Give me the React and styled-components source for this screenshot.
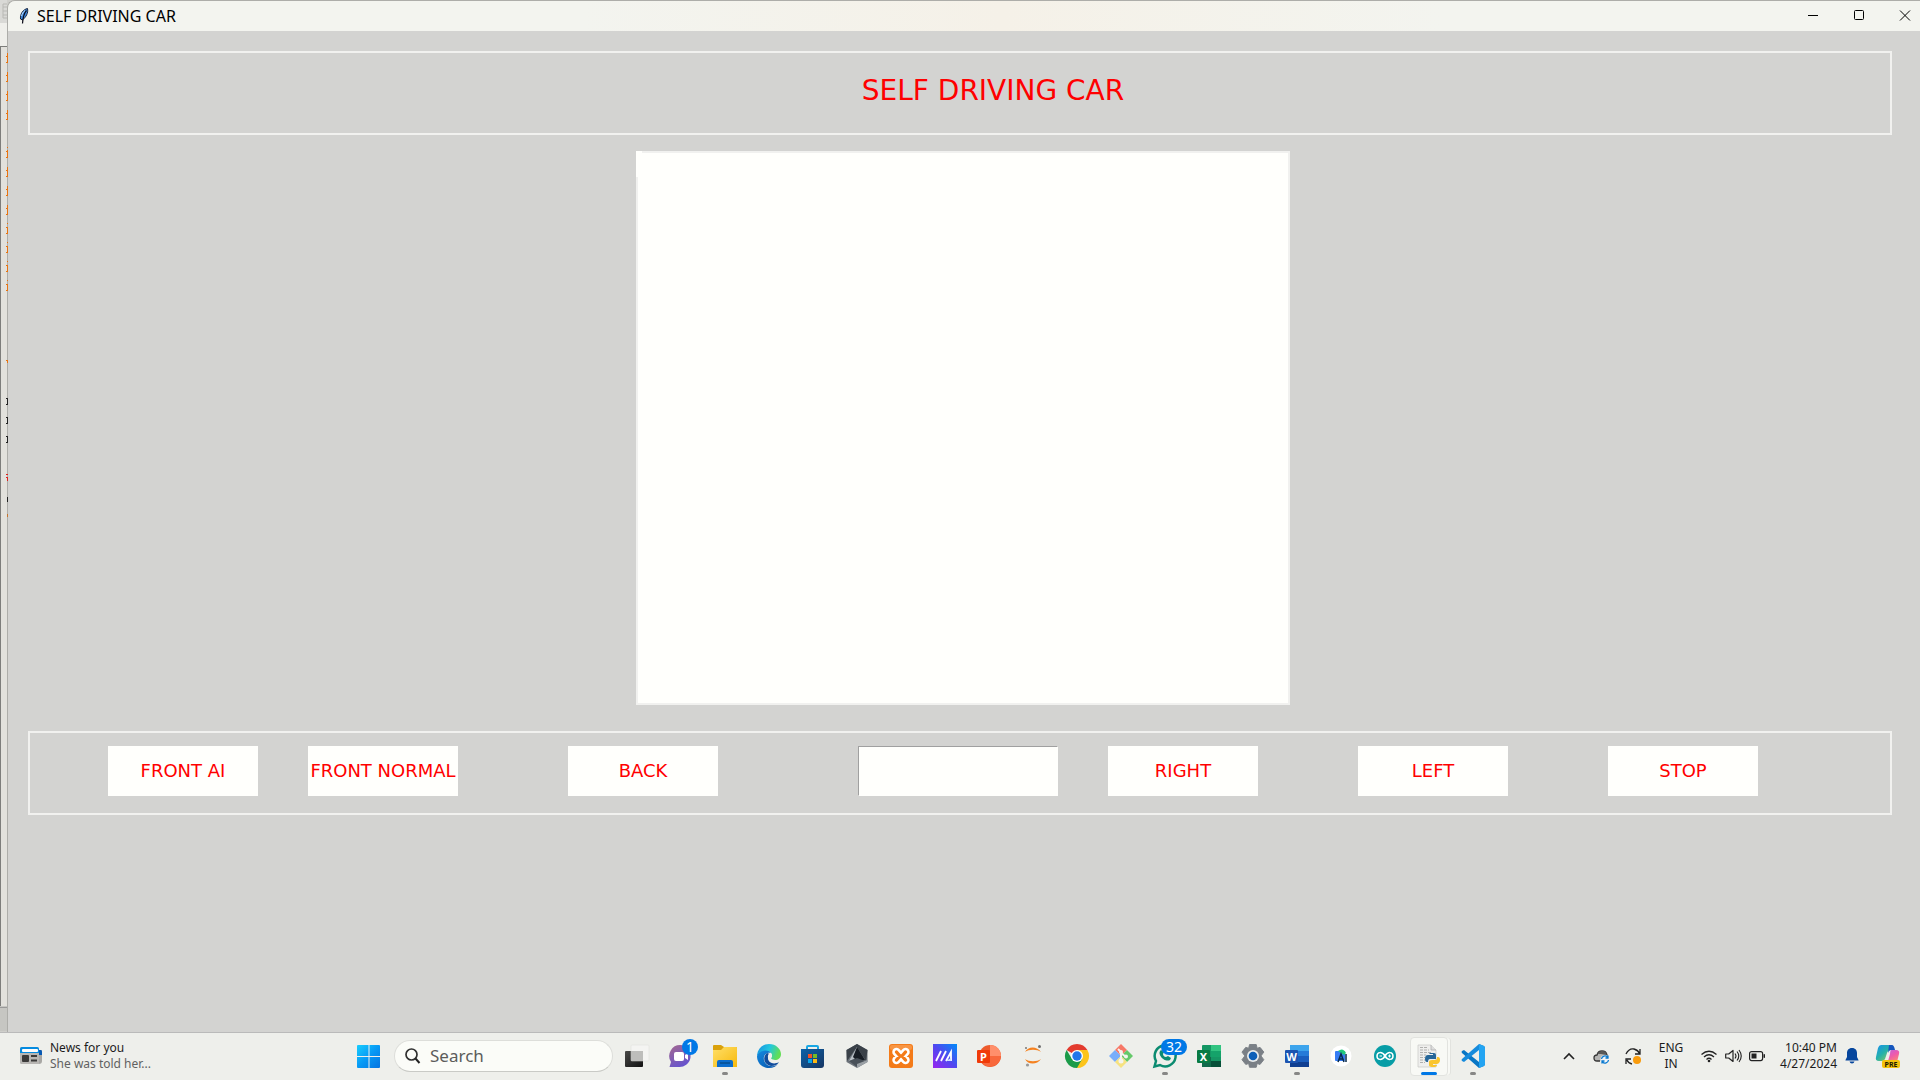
import React from "react";
import styled, { createGlobalStyle, css } from "styled-components";

const GlobalStyle = createGlobalStyle`
  * { box-sizing: border-box; }
  body { margin: 0; background: #d3d3d1; }
  button, input { font: inherit; color: inherit; margin: 0; padding: 0; border: 0; border-radius: 0; outline: 0; }
  button { background: none; cursor: pointer; }
  svg { display: block; flex: none; overflow: visible; }
`;

const uiFont = `"Noto Sans", "Open Sans", sans-serif`;
const tkFont = `"DejaVu Sans", Verdana, sans-serif`;

const Desktop = styled.div`
  min-height: 100vh;
  display: flex;
  flex-direction: column;
  font-family: ${uiFont};
  color: #1b1b1b;
`;

const Workspace = styled.div`
  flex: 1;
  display: flex;
  background: #cfcfcb;
`;

const BackWindow = styled.div`
  width: 7px;
  flex: none;
  z-index: 1;
`;

const AppWindow = styled.main`
  flex: 1;
  min-width: 0;
  display: flex;
  flex-direction: column;
  background: #d3d3d1;
  border-top: 1px solid #adada9;
  border-left: 1px solid #adada9;
  border-top-left-radius: 8px;
  overflow: hidden;
`;

const TitleBar = styled.header`
  height: 30px;
  display: flex;
  align-items: center;
  padding-left: 10px;
  background: linear-gradient(90deg, #f3f4ef 0%, #f3f4ef 30%, #f5f1e8 52%, #f3f4ef 75%);
`;

const WindowTitle = styled.h1`
  margin: 0 auto 0 7px;
  font-size: 16px;
  line-height: 24px;
  font-weight: 400;
  color: #000;
`;

const WindowButtons = styled.div`
  display: flex;
  gap: 16px;
`;

const WindowButton = styled.button`
  width: 30px;
  height: 30px;
  display: grid;
  place-items: center;
`;

const WindowBody = styled.div`
  padding: 20px 28px 20px 20px;
`;

const framed = css`
  border: 2px solid #f1f1ef;
`;

const Banner = styled.section`
  ${framed}
  padding: 24px 0 28px 66px;
  text-align: center;
`;

const BannerText = styled.h2`
  margin: 0;
  font: 400 28px/28px ${tkFont};
  color: #f00;
`;

const Stage = styled.section`
  display: flex;
  justify-content: center;
  padding: 16px 0 26px 6px;
`;

const VideoCanvas = styled.div`
  ${framed}
  width: 654px;
  height: 554px;
  background: #fffffc;
`;

const VideoLabel = styled.div`
  width: 6px;
  height: 26px;
  margin: -2px;
  background: #fffffc;
`;

const Controls = styled.section`
  ${framed}
  display: flex;
  padding: 13px 0 17px 78px;
`;

const DriveButton = styled.button`
  width: 150px;
  height: 50px;
  flex: none;
  margin-left: ${(p) => p.$gap}px;
  background: #fffffc;
  color: #f00;
  font: 400 18px/20px ${tkFont};
  white-space: nowrap;
`;

const SpeedEntry = styled.input`
  width: 200px;
  height: 50px;
  flex: none;
  margin-left: 140px;
  background: #fffffc;
  border: 1px solid #fffffc;
  border-top-color: #a0a0a0;
  border-left-color: #a0a0a0;
  font: 400 18px/20px ${tkFont};
`;

const Taskbar = styled.footer`
  height: 48px;
  display: flex;
  align-items: stretch;
  padding-bottom: 1px;
  background: #eeefeb;
  border-top: 1px solid #bababa;
`;

const NewsButton = styled.button`
  width: 347px;
  flex: none;
  display: flex;
  align-items: center;
  gap: 7px;
  padding-left: 20px;
  text-align: left;
`;

const NewsText = styled.span`
  display: block;
  font-size: 12px;
  line-height: 16px;
  color: ${(p) => (p.$muted ? "#616161" : "#1b1b1b")};
`;

const Dock = styled.nav`
  display: flex;
  align-items: center;
`;

const DockButton = styled.button`
  position: relative;
  width: 44px;
  height: 46px;
  display: grid;
  place-items: center;
`;

const ActiveCard = styled.span`
  position: absolute;
  inset: 4px 3px 3px;
  border: 1px solid #e2e3df;
  border-radius: 4px;
  background: #f8f9f5;
  box-shadow: 3px 0 0 -1px #f8f9f5, 4px 0 0 -1px #e2e3df;
`;

const IconHolder = styled.span`
  position: relative;
`;

const RunMark = styled.span`
  position: absolute;
  bottom: 4px;
  left: 50%;
  width: ${(p) => (p.$active ? 16 : 6)}px;
  height: 3px;
  border-radius: 2px;
  transform: translateX(-50%);
  background: ${(p) => (p.$active ? "#0078e6" : "#878786")};
`;

const Badge = styled.span`
  position: absolute;
  top: -5px;
  left: ${(p) => (p.$wide ? 8 : 13)}px;
  width: ${(p) => (p.$wide ? 26 : 16)}px;
  height: 16px;
  border-radius: 8px;
  background: #0078e6;
  color: #fff;
  font-size: 14px;
  line-height: 16px;
  text-align: center;
`;

const SearchBox = styled.label`
  width: 219px;
  height: 32px;
  margin: 0 2px 0 3px;
  display: flex;
  align-items: center;
  gap: 10px;
  padding: 0 12px 0 10px;
  border: 1px solid #dddeda;
  border-bottom-color: #c9cac6;
  border-radius: 16px;
  background: #fbfcf8;
`;

const SearchInput = styled.input`
  min-width: 0;
  flex: 1;
  background: none;
  font-size: 17px;
  line-height: 24px;
  &::placeholder { color: #5c5c5b; opacity: 1; }
`;

const Tray = styled.div`
  margin-left: auto;
  display: flex;
  align-items: center;
  padding-right: 8px;
`;

const TrayButton = styled.button`
  width: ${(p) => p.$w}px;
  height: 40px;
  display: grid;
  place-items: center;
`;

const TrayText = styled.button`
  width: ${(p) => p.$w}px;
  padding-right: ${(p) => (p.$end ? 3 : 0)}px;
  font-size: 12px;
  line-height: 16px;
  text-align: ${(p) => (p.$end ? "right" : "center")};
  white-space: nowrap;
`;

const Line = styled.span`
  display: block;
`;

const QuickGroup = styled.div`
  display: flex;
  margin: 0 4px;
`;

const Icon = ({ children, size = 24 }) => (
  <svg width={size} height={size} viewBox={`0 0 ${size} ${size}`} aria-hidden="true">{children}</svg>
);

/* Slivers of the editor window showing at the left edge: y, height, tick rows, colour */
const orange = "#e8730f";
const ink = "#222";
const codeMarks = [
  ...[53, 72, 91, 110].map((y) => [y, 10, [3, 9], orange]),
  [147, 1, [], orange],
  [150, 8, [1, 7], orange],
  ...[167, 186, 205].map((y) => [y, 10, [3, 9], orange]),
  ...[227, 246, 265, 284].map((y) => [y, 7, [0, 6], orange]),
  ...[223, 242, 261, 280].map((y) => [y, 1, [], orange]),
  [360, 3, [0], orange],
  ...[398, 417, 436].map((y) => [y, 7, [0, 6], ink]),
  [474, 1, [0], "#e0201c"],
  [477, 4, [0], "#e0201c"],
  [497, 5, [], ink],
  [514, 3, [], "#c8742c"],
];

const EditorEdge = () => (
  <svg width="8" height="1031" viewBox="0 0 8 1031" aria-hidden="true">
    <rect width="7" height="23" fill="#d9d9d6" />
    <path d="M3 4h4M3 7h4M3 11h4M3 15h4M3 18h4M3 4v14" stroke="#b9b9b5" fill="none" />
    <rect y="23" width="7" height="23" fill="#efefeb" />
    <rect y="46" width="7" height="960" fill="#e2e1dc" />
    <rect y="46" width="1" height="960" fill="#7d7d7b" />
    <rect y="46" width="7" height="1" fill="#7d7d7b" />
    <rect y="1006" width="7" height="25" fill="#c6c6c2" />
    <rect y="1007" width="7" height="1" fill="#999" />
    {codeMarks.map(([y, h, ticks, c]) => (
      <g key={y} fill={c}>
        <rect x="7" y={y} width="1" height={h} />
        {ticks.map((t) => <rect key={t} x="6" y={y + t} width="1" height="1" />)}
      </g>
    ))}
  </svg>
);

const Feather = () => (
  <svg width="12" height="16" viewBox="0 0 12 16" aria-hidden="true">
    <path d="M9.5.5C5 1.500 2 6 2.500 11L4.500 12C8 9 10.500 5 9.500.5Z" fill="#3f8ae0" stroke="#14213a" />
    <path d="M8.500 2.500C6 5 5 8 4.500 15.500" stroke="#0b0b18" strokeWidth="1.200" fill="none" />
    <path d="M7 2.500C5 4 4 6 3.600 8" stroke="#b8dcff" fill="none" />
  </svg>
);

const NewsIcon = () => (
  <svg width="23" height="18" viewBox="0 0 23 18" aria-hidden="true">
    <path d="M2 0h15q2 0 2 3h2q1 0 1 2v9q0 3-3 3H2q-2 0-2-2V2q0-2 2-2Z" fill="#a8a7a4" />
    <path d="M19 3h2q1 0 1 2v3h-3Z" fill="#0759b3" />
    <path d="M2 0h15q2 0 2 2v4H0V2q0-2 2-2Z" fill="#058be0" />
    <rect x="2" y="2" width="16" height="3" rx="1" fill="#fff" />
    <path d="M0 6h19v11H2q-2 0-2-2Z" fill="#b8b6b3" />
    <rect x="2" y="8" width="7" height="7" rx="1" fill="#3b3a39" />
    <path d="M11 9h6M11 13.500h6" stroke="#3b3a39" strokeWidth="2" />
  </svg>
);

const StartIcon = () => (
  <Icon>
    <defs><linearGradient id="start" x1="0" y1="0" x2="1" y2="1" gradientUnits="objectBoundingBox">
      <stop stopColor="#18cdfd" /><stop offset=".5" stopColor="#0799f5" /><stop offset="1" stopColor="#0573e0" />
    </linearGradient></defs>
    <path d="M1 1h10.500v11H0V2q0-1 1-1ZM12.500 1H22q1 0 1 1v10H12.500ZM0 13h11.500v11H1q-1 0-1-1ZM12.500 13H23v10q0 1-1 1h-9.500Z" fill="url(#start)" />
  </Icon>
);

const SearchIcon = () => (
  <svg width="15" height="16" viewBox="0 0 15 16" aria-hidden="true">
    <circle cx="6.500" cy="6.500" r="5.500" fill="none" stroke="#303030" strokeWidth="1.700" />
    <path d="m10.500 10.500 4 4.500" stroke="#222" strokeWidth="2" />
  </svg>
);

const TaskView = () => (
  <Icon>
    <defs><linearGradient id="tv" x2="1" y2="1"><stop stopColor="#484847" /><stop offset="1" stopColor="#111" /></linearGradient></defs>
    <rect y="7" width="18" height="16" rx="1" fill="url(#tv)" />
    <rect x="6" y="1" width="18" height="16" rx="1" fill="#f4f4f2" stroke="#deded9" strokeWidth=".5" />
    <path d="M6 7h12v10H6Z" fill="#bdbdbb" />
  </Icon>
);

const ChatIcon = () => (
  <Icon>
    <defs><linearGradient id="chat" x2=".5" y2="1"><stop stopColor="#a4688f" /><stop offset="1" stopColor="#6854cc" /></linearGradient></defs>
    <path d="M12 1a11 11 0 1 1-3 22L.5 23 2 18A11 11 0 0 1 12 1Z" fill="url(#chat)" />
    <rect x="5" y="8" width="10" height="9" rx="2" fill="#fff" />
    <path d="m16 11 3-2v7l-3-2Z" fill="#fff" />
  </Icon>
);

const ExplorerIcon = () => (
  <Icon>
    <defs><linearGradient id="fold" x2="1" y2="1"><stop stopColor="#ffdf68" /><stop offset="1" stopColor="#f7b90c" /></linearGradient></defs>
    <path d="M1 1h7l3 2h12q1 0 1 1v18H0V2q0-1 1-1Z" fill="#daa10a" />
    <path d="M0 6h8l3-3h12q1 0 1 1v19H0Z" fill="url(#fold)" />
    <path d="M4 23v-5q0-2 2-2h12q2 0 2 2v5Z" fill="#0c6dcc" /><path d="M7 19h10" stroke="#07569f" strokeWidth="2" />
  </Icon>
);

const EdgeIcon = () => (
  <Icon>
    <defs>
      <linearGradient id="edgeA" x2="1" y2=".3"><stop stopColor="#168be0" /><stop offset=".55" stopColor="#22c7df" /><stop offset="1" stopColor="#62de55" /></linearGradient>
      <linearGradient id="edgeB" y2="1"><stop stopColor="#1389df" /><stop offset="1" stopColor="#0753aa" /></linearGradient>
    </defs>
    <path d="M0 11C1 4 6 0 12 0c7 0 12 5 12 10 0 4-3 6-6 6-3 0-4-1-4-2 1-1 1-2 1-3C14 5 4 6 0 12Z" fill="url(#edgeA)" />
    <path d="M0 12C2 6 11 5 14 9c-5-1-8 3-7 7 1 5 7 8 13 5l2-2c-2 3-6 5-10 5C5 24 0 19 0 12Z" fill="url(#edgeB)" />
    <path d="M10 9c-5 4-3 12 4 13 4 0 6-1 8-4-5 3-11 1-11-4 0-2 1-3 2-4Z" fill="#104c9c" />
    <path d="M13 9c-2 1-3 4-1 7 2 2 7 3 10 1-1-1-3-1-4-1-3 0-4-1-4-2 1-1 1-2 1-3q0-1-2-2Z" fill="#eeefeb" />
  </Icon>
);

const StoreIcon = () => (
  <Icon>
    <defs><linearGradient id="store" y2="1"><stop stopColor="#0c62a8" /><stop offset="1" stopColor="#173663" /></linearGradient></defs>
    <path d="M6 6V3q0-1 1-1h9q1 0 1 1v3" stroke="#18a7e4" strokeWidth="2" fill="none" />
    <path d="M0 5h23v16q0 3-3 3H3q-3 0-3-3Z" fill="url(#store)" />
    <path d="M7 10h4v4H7Z" fill="#f35225" /><path d="M12 10h4v4h-4Z" fill="#73ba25" />
    <path d="M7 15h4v4H7Z" fill="#08a5ec" /><path d="M12 15h4v4h-4Z" fill="#fdb914" />
  </Icon>
);

const HexIcon = () => (
  <Icon>
    <path d="m12 0 10.500 6v12L12 24 1.500 18V6Z" fill="#6d747b" />
    <path d="m12 0 10.500 6L21 17 12 3 2 17 1.500 6Z" fill="#3a4148" />
    <path d="M12 3 4 17l8-3Z" fill="#b8bfc5" /><path d="m12 3-4 10 4 4 8-1Z" fill="#171d24" />
    <path d="m4 17 8-3 8 3-8 6Z" fill="#485058" /><path d="m12 24 10.500-6v-2L12 20Z" fill="#9aa0a5" />
  </Icon>
);

const XamppIcon = () => (
  <Icon>
    <rect width="24" height="24" rx="3" fill="#f47b18" />
    <rect x="1" y="1" width="22" height="5" rx="2" fill="#f89543" />
    <g fill="none" strokeLinecap="round" strokeLinejoin="round">
      <path d="M7.500 8 11 12 7.500 16M16.500 8 13 12l3.500 4M11 12h2" stroke="#fff" strokeWidth="8.500" />
      <path d="M7.500 8 11 12 7.500 16M16.500 8 13 12l3.500 4M11 12h2" stroke="#f47b18" strokeWidth="3.400" />
    </g>
  </Icon>
);

const MyAsusIcon = () => (
  <Icon>
    <defs><linearGradient id="asus" x1="0" y1="1" x2="1" y2="0"><stop stopColor="#9824ef" /><stop offset=".5" stopColor="#5048f0" /><stop offset="1" stopColor="#008cf8" /></linearGradient></defs>
    <rect width="24" height="24" fill="url(#asus)" />
    <path d="m3 17 5-10M8 17l5-10M13 17l5-9v9" stroke="#fff" strokeWidth="1.800" fill="none" /><path d="m13 17 5-3v3" fill="#cfe2ff" />
  </Icon>
);

const OfficeTile = ({ c, letter }) => (
  <>
    <rect y="6" width="13" height="13" rx="1" fill={c} />
    <text x="6.500" y="16.500" fontFamily={uiFont} fontSize="11" fontWeight="700" fill="#fff" textAnchor="middle">{letter}</text>
  </>
);

const PowerPointIcon = () => (
  <Icon>
    <circle cx="13" cy="12" r="11" fill="#ed5b2c" /><path d="M13 1a11 11 0 0 1 11 11H13Z" fill="#ff8f6b" />
    <path d="M24 12a11 11 0 0 1-21 4l10-4Z" fill="#f8683c" /><OfficeTile c="#f03a08" letter="P" />
  </Icon>
);

const JupyterIcon = () => (
  <Icon>
    <path d="M4 8c3-6 12-6 16 0-4-3-12-3-16 0ZM4 15c3 6 12 6 16 0-4 3-12 3-16 0Z" fill="#f58220" />
    <circle cx="18.500" cy="2.500" r="1.500" fill="#707070" /><circle cx="5" cy="4" r="1" fill="#777" /><circle cx="6.500" cy="21" r="1.600" fill="#999" />
  </Icon>
);

const ChromeIcon = () => (
  <Icon>
    <path d="M12 12 1.600 6A12 12 0 0 1 22.400 6Z" fill="#e33b2e" />
    <path d="M12 12V6h10.400A12 12 0 0 1 12 24Z" fill="#fcc41c" />
    <path d="M1.600 6A12 12 0 0 0 12 24l5.200-9L7 15Z" fill="#1b9b49" />
    <circle cx="12" cy="12" r="6" fill="#fff" /><circle cx="12" cy="12" r="4.700" fill="#2276ea" />
  </Icon>
);

const GitIcon = () => (
  <Icon>
    <path d="M12 0 18 6l-6 6-6-6Z" fill="#f77867" /><path d="m6 6 6 6-6 6-6-6Z" fill="#79aefa" />
    <path d="m18 6 6 6-6 6-6-6Z" fill="#65c96a" /><path d="m12 12 6 6-6 6-6-6Z" fill="#f6e280" />
    <path d="M9 5l3 3v10M12 9l5 4" stroke="#f4f4ef" strokeWidth="2" fill="none" />
    <circle cx="12" cy="8" r="2" fill="#f4f4ef" /><circle cx="12" cy="17" r="2.500" fill="#f4f4ef" /><circle cx="17" cy="12.500" r="2" fill="#f4f4ef" />
  </Icon>
);

const WhatsAppIcon = () => (
  <Icon>
    <path d="M1.500 22.500 3 17A10.500 10.500 0 1 1 7 21Z" fill="none" stroke="#0b8b70" strokeWidth="2.500" />
    <path d="M8 6c-5 4 4 13 9 10l1-2-3-2-2 1c-2 0-3-2-3-3l1-2Z" fill="#0b8b70" />
  </Icon>
);

const ExcelIcon = () => (
  <Icon>
    <rect x="5" y="1" width="19" height="22" rx="1" fill="#159764" /><path d="M14 1h10v6H14Z" fill="#32c481" />
    <path d="M14 7h10v6H14Z" fill="#15a36a" /><path d="M5 13h9v10H5Z" fill="#10694a" /><path d="M14 17h10v6H14Z" fill="#075039" />
    <OfficeTile c="#087b43" letter="X" />
  </Icon>
);

const GearIcon = () => (
  <Icon>
    <path d="M8.500 0h7l1 4 3-1 4 5-3 4 3 4-4 5-3-1-1 4h-7l-1-4-3 1-4-5 3-4-3-4 4-5 3 1Z" fill="#7a8086" stroke="#7a8086" strokeLinejoin="round" transform="translate(.5 .5) scale(.95)" />
    <circle cx="12" cy="12" r="6" fill="#e9ecec" /><circle cx="12" cy="12" r="4.300" fill="#0c5fb8" />
  </Icon>
);

const WordIcon = () => (
  <Icon>
    <rect x="5" y="1" width="19" height="22" rx="1" fill="#1a5ebe" /><path d="M5 1h19v6H5Z" fill="#3da4ec" />
    <path d="M5 7h19v5H5Z" fill="#267bd8" /><path d="M5 18h19v5H5Z" fill="#103f91" /><OfficeTile c="#1c54b0" letter="W" />
  </Icon>
);

const StudioIcon = () => (
  <Icon>
    <circle cx="12" cy="12" r="10.500" fill="#fff" /><rect x="6" y="7" width="10" height="10" rx="1" fill="#367df4" />
    <path d="M9 7q5-4 8 2l-2 2Z" fill="#22c97b" /><path d="m9 18 3-8 3 8M10 15h4M17 10v8" stroke="#082a4a" strokeWidth="1.500" fill="none" />
  </Icon>
);

const ArduinoIcon = () => (
  <Icon>
    <circle cx="12" cy="12" r="11" fill="#079da6" />
    <path d="M12 12C9 7 4 8 4 12s5 5 8 0 8-4 8 0-5 5-8 0Z" fill="none" stroke="#fff" strokeWidth="1.500" />
    <path d="M6.500 12h2.500M15 12h3M16.500 10.500v3" stroke="#fff" />
  </Icon>
);

const PythonFile = () => (
  <Icon>
    <path d="M1 1h13l5 5v17H1Z" fill="#efefed" stroke="#c8c8c6" strokeWidth=".7" /><path d="M14 1v5h5" fill="#ddd" stroke="#aaa" strokeWidth=".7" />
    <path d="M3 3.500h8M3 6h9M3 8.500h12M3 11h6M3 13.500h5M3 16h5M3 18.500h5" stroke="#b1b1af" strokeDasharray="3 1" />
    <path d="M13 9h4q2 0 2 2v4h-6q-2 0-2 3h-1q-2 0-2-3 0-4 3-4h5v-1h-4Z" fill="#276799" />
    <path d="M20 13h1q2 0 2 3t-3 4h-4v1h4q0 2-4 2t-4-2v-3q0-2 3-2h3q2 0 2-2Z" fill="#fac62f" />
  </Icon>
);

const CodeIcon = () => (
  <Icon>
    <path d="m18 0 5 2q1 1 1 2v16q0 1-1 2l-5 2L1 9q-1-1 0-2l2-1 15 12Z" fill="#0876c5" />
    <path d="m18 0-17 15q-1 1 0 2l2 1L18 6Z" fill="#168bdc" />
    <path d="m18 0 5 2q1 1 1 2v16q0 1-1 2l-5 2Z" fill="#23a4f2" />
  </Icon>
);

const Chevron = () => <svg width="12" height="8" viewBox="0 0 12 8" aria-hidden="true"><path d="m1 7 5-5 5 5" fill="none" stroke="#222" strokeWidth="1.600" /></svg>;
const Cloud = () => (
  <Icon size={16}>
    <path d="M7 13H4q-3 0-3-3t3-3q1-4 5-4t5 4v2" fill="#b4b4b2" stroke="#343434" strokeWidth="1.300" />
    <path d="M4.500 6q1-3 5-3t4 4L8 6Z" fill="#5a5a59" />
    <circle cx="12" cy="11.500" r="4.500" fill="#f3f6f8" />
    <path d="M8.500 11a3.500 3.500 0 0 1 6-2m.5-1.500V10h-2.500M15.500 12a3.500 3.500 0 0 1-6 2m-.5 1.500V13h2.500" fill="none" stroke="#0878ce" strokeWidth="1.300" />
  </Icon>
);
const Sync = () => (
  <Icon size={16}>
    <path d="M1 6q3-6 8-5 4 1 6 5M15 1v5h-5M1 16v-5h5M2 12q1 3 5 4" fill="none" stroke="#222" strokeWidth="1.300" />
    <circle cx="12" cy="12" r="4" fill="#f99b0c" />
  </Icon>
);
const Wifi = () => (
  <Icon size={16}>
    <path d="M.5 6.500Q8 0 15.500 6.500M3 9q5-4.500 10 0M5.500 11.500q2.500-2.500 5 0" fill="none" stroke="#222" strokeWidth="1.300" />
    <circle cx="8" cy="13" r="1.300" fill="#222" />
  </Icon>
);
const Speaker = () => (
  <Icon size={16}>
    <path d="M.7 6h3L8 2.500v11L3.700 10h-3Z" fill="none" stroke="#222" strokeLinejoin="round" strokeWidth="1.200" />
    <path d="M10 5.500q2 2.500 0 5M12 3.500q3.500 4.500 0 9M14 2q4.500 6 0 12" fill="none" stroke="#222" strokeWidth="1.100" />
  </Icon>
);
const Battery = () => (
  <Icon size={16}>
    <rect x=".6" y="3.600" width="13" height="9" rx="2" fill="none" stroke="#222" strokeWidth="1.200" />
    <rect x="2.500" y="5.500" width="5" height="5" fill="#222" /><rect x="14.500" y="6" width="1.500" height="4" rx=".7" fill="#222" />
  </Icon>
);
const Bell = () => (
  <svg width="14" height="16" viewBox="0 0 14 16" aria-hidden="true">
    <path d="M7 0c3.500 0 5 2.500 5 5v4l1.500 3v.5H.5V12L2 9V5c0-2.500 1.500-5 5-5Z" fill="#06469d" /><path d="M4.500 13.500h5Q9 15.500 7 15.500t-2.500-2Z" fill="#06469d" />
  </svg>
);
const Copilot = () => (
  <Icon>
    <defs>
      <linearGradient id="cpA" y2="1"><stop stopColor="#1690ee" /><stop offset=".45" stopColor="#25b1aa" /><stop offset="1" stopColor="#b1cf42" /></linearGradient>
      <linearGradient id="cpB" x2=".5" y2="1"><stop stopColor="#b466e6" /><stop offset=".5" stopColor="#ef5aab" /><stop offset="1" stopColor="#ff9360" /></linearGradient>
    </defs>
    <path d="M5 1h9q3 0 4 5h-4q-2 0-3 3l-2 6q-1 2-3 2H3q-4 0-3-4L2 4q1-3 3-3Z" fill="url(#cpA)" />
    <path d="M13 1h3q2 0 3 5h-4q-2 0-3 3Z" fill="#1556bd" />
    <path d="M15 6h5q4 0 3 4l-2 8q-1 4-4 4H8q3-1 4-5l2-7q0-3 1-4Z" fill="url(#cpB)" />
    <rect x="6" y="16" width="18" height="8" rx="2" fill="#f4c20d" />
    <text x="15" y="22.500" fontFamily={uiFont} fontSize="7" fontWeight="700" textAnchor="middle" fill="#201a00">PRE</text>
  </Icon>
);

const apps = [
  { name: "Task view", icon: TaskView },
  { name: "Chat", icon: ChatIcon, badge: "1" },
  { name: "File Explorer", icon: ExplorerIcon, running: true },
  { name: "Edge", icon: EdgeIcon },
  { name: "Store", icon: StoreIcon },
  { name: "Armoury", icon: HexIcon },
  { name: "XAMPP", icon: XamppIcon },
  { name: "MyASUS", icon: MyAsusIcon },
  { name: "PowerPoint", icon: PowerPointIcon },
  { name: "Jupyter", icon: JupyterIcon },
  { name: "Chrome", icon: ChromeIcon },
  { name: "Git", icon: GitIcon },
  { name: "WhatsApp", icon: WhatsAppIcon, badge: "32", running: true },
  { name: "Excel", icon: ExcelIcon },
  { name: "Settings", icon: GearIcon },
  { name: "Word", icon: WordIcon, running: true },
  { name: "Android Studio", icon: StudioIcon },
  { name: "Arduino", icon: ArduinoIcon },
  { name: "Python", icon: PythonFile, active: true },
  { name: "Visual Studio Code", icon: CodeIcon, running: true },
];

const DockItem = ({ name, icon: Glyph, badge, running, active }) => (
  <DockButton aria-label={name}>
    {active && <ActiveCard />}
    <IconHolder>
      <Glyph />
      {badge && <Badge $wide={badge.length > 1}>{badge}</Badge>}
    </IconHolder>
    {(running || active) && <RunMark $active={active} />}
  </DockButton>
);

export default function App() {
  return (
    <Desktop>
      <GlobalStyle />
      <Workspace>
        <BackWindow><EditorEdge /></BackWindow>
        <AppWindow>
          <TitleBar>
            <Feather />
            <WindowTitle>SELF DRIVING CAR</WindowTitle>
            <WindowButtons>
              <WindowButton aria-label="Minimize"><Icon size={10}><path d="M0 4.500h10" stroke="#000" /></Icon></WindowButton>
              <WindowButton aria-label="Maximize"><Icon size={10}><rect x=".5" y="-.5" width="9" height="9" rx="1" fill="none" stroke="#000" /></Icon></WindowButton>
              <WindowButton aria-label="Close"><Icon size={10}><path d="m0-.5 10 10M10-.5 0 9.500" stroke="#000" /></Icon></WindowButton>
            </WindowButtons>
          </TitleBar>
          <WindowBody>
            <Banner><BannerText>SELF DRIVING CAR</BannerText></Banner>
            <Stage><VideoCanvas><VideoLabel /></VideoCanvas></Stage>
            <Controls>
              <DriveButton $gap={0}>FRONT AI</DriveButton>
              <DriveButton $gap={50}>FRONT NORMAL</DriveButton>
              <DriveButton $gap={110}>BACK</DriveButton>
              <SpeedEntry aria-label="Speed" type="text" />
              <DriveButton $gap={50}>RIGHT</DriveButton>
              <DriveButton $gap={100}>LEFT</DriveButton>
              <DriveButton $gap={100}>STOP</DriveButton>
            </Controls>
          </WindowBody>
        </AppWindow>
      </Workspace>
      <Taskbar>
        <NewsButton>
          <NewsIcon />
          <span>
            <NewsText>News for you</NewsText>
            <NewsText $muted>She was told her...</NewsText>
          </span>
        </NewsButton>
        <Dock aria-label="Apps">
          <DockButton aria-label="Start"><StartIcon /></DockButton>
          <SearchBox>
            <SearchIcon />
            <SearchInput type="text" placeholder="Search" aria-label="Search" />
          </SearchBox>
          {apps.map((a) => <DockItem key={a.name} {...a} />)}
        </Dock>
        <Tray>
          <TrayButton $w={32} aria-label="Hidden icons"><Chevron /></TrayButton>
          <TrayButton $w={32} aria-label="OneDrive"><Cloud /></TrayButton>
          <TrayButton $w={32} aria-label="Updates"><Sync /></TrayButton>
          <TrayText $w={44}><Line>ENG</Line><Line>IN</Line></TrayText>
          <QuickGroup>
            <TrayButton $w={24} aria-label="Wi-Fi"><Wifi /></TrayButton>
            <TrayButton $w={24} aria-label="Volume"><Speaker /></TrayButton>
            <TrayButton $w={24} aria-label="Battery"><Battery /></TrayButton>
          </QuickGroup>
          <TrayText $w={67} $end><Line>10:40 PM</Line><Line>4/27/2024</Line></TrayText>
          <TrayButton $w={24} aria-label="Notifications"><Bell /></TrayButton>
          <TrayButton $w={48} aria-label="Copilot"><Copilot /></TrayButton>
        </Tray>
      </Taskbar>
    </Desktop>
  );
}
